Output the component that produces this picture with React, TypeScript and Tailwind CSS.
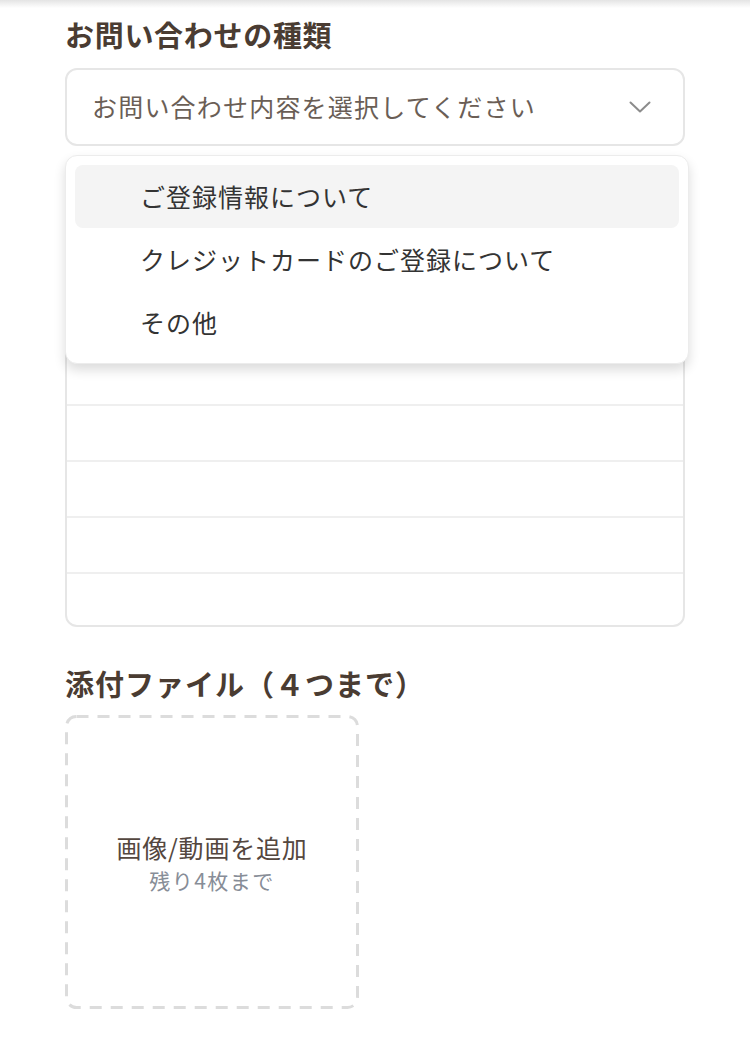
const options = ['ご登録情報について', 'クレジットカードのご登録について', 'その他'];

export default function App() {
  return (
    <div
      className="relative min-h-[1053px] w-[750px] bg-white"
      style={{ fontFamily: '"Noto Sans CJK JP", "Noto Sans", sans-serif' }}
    >
      {/* shadow of the header above */}
      <div className="h-[8px] bg-gradient-to-b from-[#e4e4e4] to-white" />

      <div className="px-[65px]">
        <h2 className="mt-[6px] text-[29px] font-bold leading-[40px] tracking-[0.7px] text-[#4a3c32]">
          お問い合わせの種類
        </h2>

        <div className="relative mt-[14px]">
          <button className="flex h-[78px] w-full items-center justify-between rounded-[12px] border-2 border-[#e6e6e6] bg-white pl-[25px] pr-[30px] text-left">
            <span className="text-[25px] tracking-[1.2px] text-[#6a5e56]">
              お問い合わせ内容を選択してください
            </span>
            <svg width="22" height="12" viewBox="0 0 22 12" fill="none" className="mr-[2px]">
              <polyline
                points="1.5,1.5 11,10.5 20.5,1.5"
                stroke="#8c8c8c"
                strokeWidth="2"
                strokeLinecap="round"
                strokeLinejoin="round"
              />
            </svg>
          </button>

          {/* textarea under the open menu */}
          <div className="mt-[34px] overflow-hidden rounded-[12px] border-2 border-[#e6e6e6]">
            {Array.from({ length: 8 }).map((_, i) => (
              <div
                key={i}
                className={i < 7 ? 'h-[56px] border-b-2 border-[#efefef]' : 'h-[51px]'}
              />
            ))}
          </div>

          {/* open menu */}
          <div className="absolute left-0 top-[87px] z-10 w-[624px] rounded-[12px] border border-[#ececec] bg-white px-[9px] py-[9px] shadow-[0_6px_12px_rgba(0,0,0,0.14)]">
            {options.map((o, i) => (
              <div
                key={o}
                className={
                  'flex h-[63px] items-center rounded-[8px] pl-[65px] text-[25px] tracking-[1px] text-[#333333] ' +
                  (i === 0 ? 'bg-[#f4f4f4]' : '')
                }
              >
                {o}
              </div>
            ))}
          </div>
        </div>

        <h2 className="mt-[36px] text-[29px] font-bold leading-[40px] tracking-[1px] text-[#4a3c32]">
          添付ファイル（４つまで）
        </h2>

        <div className="relative mt-[12px] flex h-[294px] w-[294px] flex-col items-center justify-center">
          {/* long-dash border */}
          <svg className="absolute inset-0" width="294" height="294" fill="none">
            <rect
              x="1.5"
              y="1.5"
              width="291"
              height="291"
              rx="10"
              stroke="#dcdcdc"
              strokeWidth="3"
              strokeDasharray="12 9"
            />
          </svg>
          <span className="text-[25px] leading-[34px] tracking-[0.8px] text-[#54473f]">
            画像/動画を追加
          </span>
          <span className="mt-[2px] text-[21px] leading-[28px] tracking-[1.5px] text-[#878d97]">
            残り4枚まで
          </span>
        </div>
      </div>
    </div>
  );
}
